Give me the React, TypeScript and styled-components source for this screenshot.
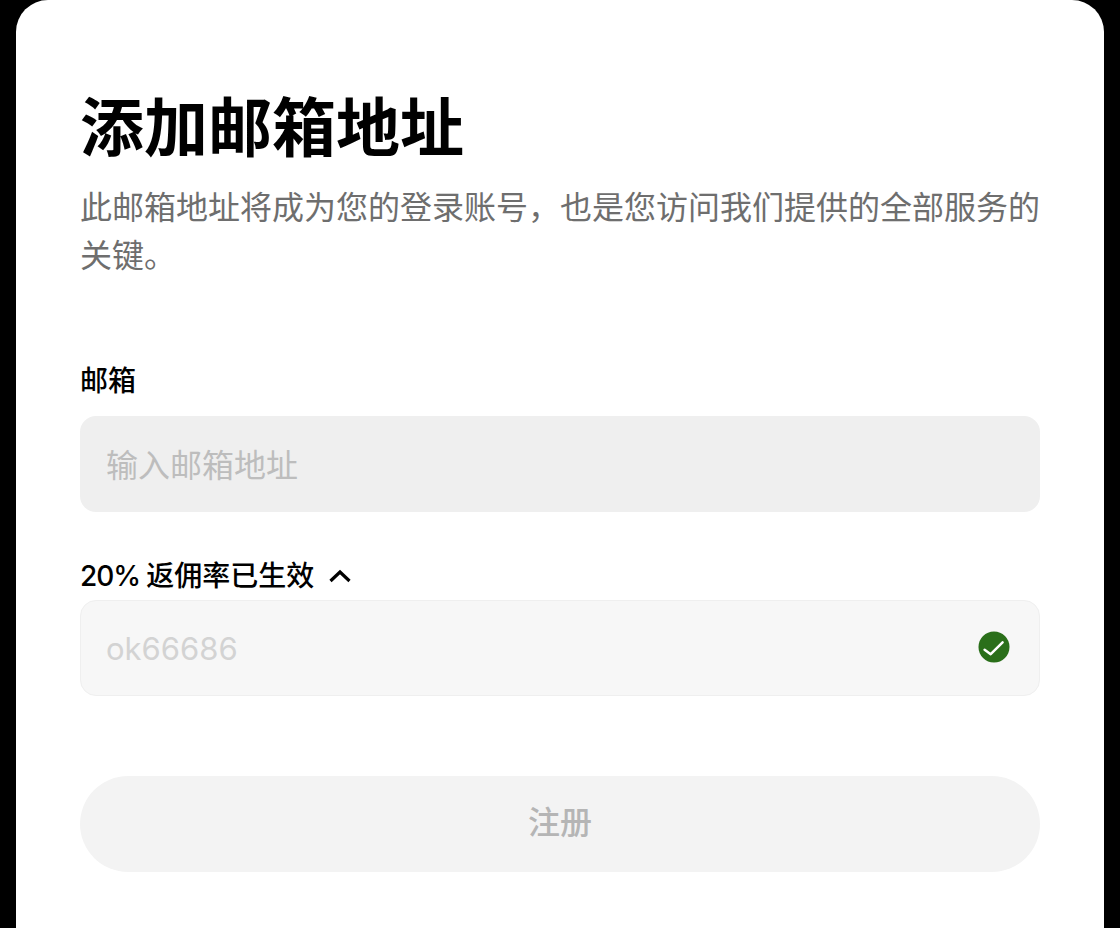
import React from "react";
import styled, { createGlobalStyle } from "styled-components";

const Global = createGlobalStyle`
  html, body { margin: 0; padding: 0; background: #000; }
  body { font-family: Inter, "Noto Sans CJK SC", sans-serif; }
`;

const Screen = styled.div`
  width: 1120px;
  height: 928px;
  overflow: hidden;
  padding: 0 16px;
  box-sizing: border-box;
`;

const Card = styled.main`
  height: 928px;
  box-sizing: border-box;
  background: #fff;
  border-radius: 32px 32px 0 0;
  padding: 92px 64px 0;
  display: flex;
  flex-direction: column;
`;

const Title = styled.h1`
  margin: 0;
  font-size: 64px;
  line-height: 72px;
  font-weight: 700;
  color: #000;
`;

const Subtitle = styled.p`
  margin: 20px 0 0;
  font-size: 32px;
  line-height: 48px;
  color: #6e6e6e;
`;

const Label = styled.label`
  display: flex;
  align-items: center;
  gap: 15px;
  font-size: 28px;
  line-height: 40px;
  font-weight: 500;
  color: #000;
`;

const Rate = styled.span`
  letter-spacing: -1.1px;
`;

const Chevron = styled.svg`
  margin-left: -1px;
`;

const CheckBadge = styled.svg`
  margin-bottom: 2px;
`;

const Field = styled.div<{ $muted?: boolean }>`
  height: 96px;
  box-sizing: border-box;
  margin-top: ${(p) => (p.$muted ? "4px" : "15px")};
  padding: ${(p) => (p.$muted ? "0 29px 0 25px" : "0 26px 2px")};
  border-radius: 16px;
  display: flex;
  align-items: center;
  justify-content: space-between;
  font-size: ${(p) => (p.$muted ? "31px" : "32px")};
  background: ${(p) => (p.$muted ? "#f7f7f7" : "#efefef")};
  border: ${(p) => (p.$muted ? "1px solid #efefef" : "none")};
  color: ${(p) => (p.$muted ? "#d3d3d3" : "#bdbdbd")};
`;

const EmailGroup = styled.div`
  margin-top: 81px;
`;

const CodeGroup = styled.div`
  margin-top: 44px;
`;

const Submit = styled.button`
  margin-top: 80px;
  height: 96px;
  border: 0;
  padding: 0 0 8px;
  border-radius: 48px;
  background: #f3f3f3;
  color: #b5b5b5;
  font-family: inherit;
  font-size: 32px;
  font-weight: 500;
`;

export default function App() {
  return (
    <Screen>
      <Global />
      <Card>
        <Title>添加邮箱地址</Title>
        <Subtitle>此邮箱地址将成为您的登录账号，也是您访问我们提供的全部服务的关键。</Subtitle>
        <EmailGroup>
          <Label>邮箱</Label>
          <Field>输入邮箱地址</Field>
        </EmailGroup>
        <CodeGroup>
          <Label>
            <span>
              <Rate>20% </Rate>返佣率已生效
            </span>
            <Chevron width="24" height="14" viewBox="0 0 24 14" fill="none">
              <path d="M2.5 12 12 3l9.5 9" stroke="#000" strokeWidth="3.2" />
            </Chevron>
          </Label>
          <Field $muted>
            ok66686
            <CheckBadge width="32" height="32" viewBox="0 0 32 32" fill="none">
              <circle cx="16" cy="16" r="15.5" fill="#2a6f1a" />
              <path
                d="M6.6 18.8 12.7 23.2 24.6 11.4"
                stroke="#fff"
                strokeWidth="2.5"
                strokeLinecap="round"
                strokeLinejoin="round"
              />
            </CheckBadge>
          </Field>
        </CodeGroup>
        <Submit type="button">注册</Submit>
      </Card>
    </Screen>
  );
}
